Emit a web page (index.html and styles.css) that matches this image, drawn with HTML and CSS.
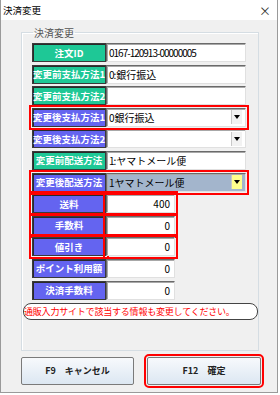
FILE: index.html
```html
<!DOCTYPE html>
<html lang="ja">
<head>
  <meta charset="UTF-8" />
  <title>決済変更</title>
  <link rel="stylesheet" href="styles.css">
</head>
<body>
  <div class="window">
    <div class="titlebar">
      <span class="title">決済変更</span>
      <span class="close">×</span>
    </div>
    <div class="client">
      <fieldset class="group">
        <legend>決済変更</legend>

        <div class="row">
          <div class="label green">注文ID</div>
          <div class="field long"><span class="num">0167-120913-00000005</span></div>
        </div>
        <div class="row">
          <div class="label green">変更前支払方法1</div>
          <div class="field long"><span class="num">0:</span>銀行振込</div>
        </div>
        <div class="row">
          <div class="label green">変更前支払方法2</div>
          <div class="field long"></div>
        </div>
        <div class="row marked">
          <div class="label blue">変更後支払方法1</div>
          <div class="field long combo"><span class="val"><span class="num">0</span>銀行振込</span><span class="drop"></span></div>
        </div>
        <div class="row">
          <div class="label blue">変更後支払方法2</div>
          <div class="field long combo"><span class="val"></span><span class="drop"></span></div>
        </div>
        <div class="row">
          <div class="label green">変更前配送方法</div>
          <div class="field long"><span class="num">1:</span>ヤマトメール便</div>
        </div>
        <div class="row marked">
          <div class="label blue">変更後配送方法</div>
          <div class="field long combo selected"><span class="val"><span class="num">1</span>ヤマトメール便</span><span class="drop yellow"></span></div>
        </div>
        <div class="row">
          <div class="label blue boxed">送料</div>
          <div class="field short boxed">400</div>
        </div>
        <div class="row">
          <div class="label blue boxed">手数料</div>
          <div class="field short boxed">0</div>
        </div>
        <div class="row">
          <div class="label blue boxed">値引き</div>
          <div class="field short boxed">0</div>
        </div>
        <div class="row">
          <div class="label blue">ポイント利用額</div>
          <div class="field short">0</div>
        </div>
        <div class="row">
          <div class="label blue">決済手数料</div>
          <div class="field short">0</div>
        </div>

        <div class="notice">通販入力サイトで該当する情報も変更してください。</div>
      </fieldset>

      <div class="buttons">
        <button class="btn">F9　キャンセル</button>
        <button class="btn ok">F12　確定</button>
      </div>
    </div>
  </div>
</body>
</html>
```

FILE: styles.css
```css
* {
  box-sizing: border-box;
}

body {
  margin: 0;
  background: #ffffff;
  font-family: "Noto Sans CJK JP", "Noto Sans", sans-serif;
}

.window {
  width: 278px;
  height: 393px;
  background: #f0f0f0;
  border: 1px solid #9a9a9a;
  border-top: none;
}

.titlebar {
  height: 20px;
  background: #ffffff;
  display: flex;
  align-items: center;
  justify-content: space-between;
  padding: 0 6px 0 2px;
  font-size: 9.5px;
  color: #000;
}

.close {
  font-size: 12px;
  color: #333;
}

.client {
  padding: 6px 0 0 20px;
}

.group {
  width: 237px;
  margin: 0;
  padding: 4px 0 30px 10px;
  border: 1px solid #d5dde3;
  box-shadow: inset 1px 1px 0 #ffffff;
}

.group legend {
  font-size: 10px;
  line-height: 13px;
  color: #555;
  padding: 0 1px;
  margin-left: 1px;
}

.row {
  display: flex;
  height: 19px;
  margin-bottom: 2.6px;
}

.row.marked {
  outline: 2px solid #ff0000;
  outline-offset: 1px;
  width: 214px;
}

.label {
  width: 74px;
  flex-shrink: 0;
  display: flex;
  align-items: center;
  justify-content: center;
  color: #ffffff;
  font-size: 9.5px;
  font-weight: bold;
  white-space: nowrap;
  border: 1px solid #3a3a3a;
  box-shadow: inset 1px 1px 0 #2a2a2a;
}

.label.green {
  background: #1ec896;
}

.label.blue {
  background: #6464f0;
}

.boxed {
  outline: 2px solid #ff0000;
  outline-offset: 1px;
}

.field {
  background: #ffffff;
  border: 1px solid;
  border-color: #6a6a6a #e0e0e0 #e0e0e0 #6a6a6a;
  box-shadow: inset 1px 1px 0 #a8a8a8;
  font-size: 10px;
  line-height: 17px;
  padding: 0 2px;
  white-space: nowrap;
  overflow: hidden;
  color: #000;
}

.field.long {
  width: 140px;
}

.field.short {
  width: 69px;
  text-align: right;
  padding-right: 4px;
}

.num {
  letter-spacing: -1px;
  margin-right: 1px;
}

.combo {
  display: flex;
  align-items: center;
  padding: 0 3px 0 2px;
}

.combo .val {
  flex: 1;
}

.combo.selected {
  background: #a3b5cc;
}

.drop {
  width: 11px;
  height: 14px;
  background: #f2f2f2;
  border-left: 1px solid #c8c8c8;
  display: flex;
  align-items: center;
  justify-content: center;
}

.drop::after {
  content: "";
  border-left: 3.5px solid transparent;
  border-right: 3.5px solid transparent;
  border-top: 4px solid #000;
}

.drop.yellow {
  background: #ffff8c;
}

.notice {
  width: 235px;
  height: 17px;
  margin: 3px 0 0 -9px;
  background: #ffffff;
  border: 1px solid #444;
  border-radius: 8px;
  color: #ff0000;
  font-size: 9px;
  letter-spacing: -0.2px;
  line-height: 15px;
  white-space: nowrap;
  overflow: hidden;
  padding-left: 0;
}

.buttons {
  display: flex;
  gap: 13px;
  margin-top: 6px;
}

.btn {
  width: 113px;
  height: 28px;
  border: 1px solid #7a7a7a;
  border-radius: 2px;
  background: linear-gradient(#f7f9fc, #dce7f2);
  font-family: "Noto Sans CJK JP", "Noto Sans", sans-serif;
  font-size: 9px;
  font-weight: bold;
  color: #222;
  padding: 0;
}

.btn.ok {
  width: 114px;
  outline: 2px solid #ff0000;
  outline-offset: 1px;
}
```
